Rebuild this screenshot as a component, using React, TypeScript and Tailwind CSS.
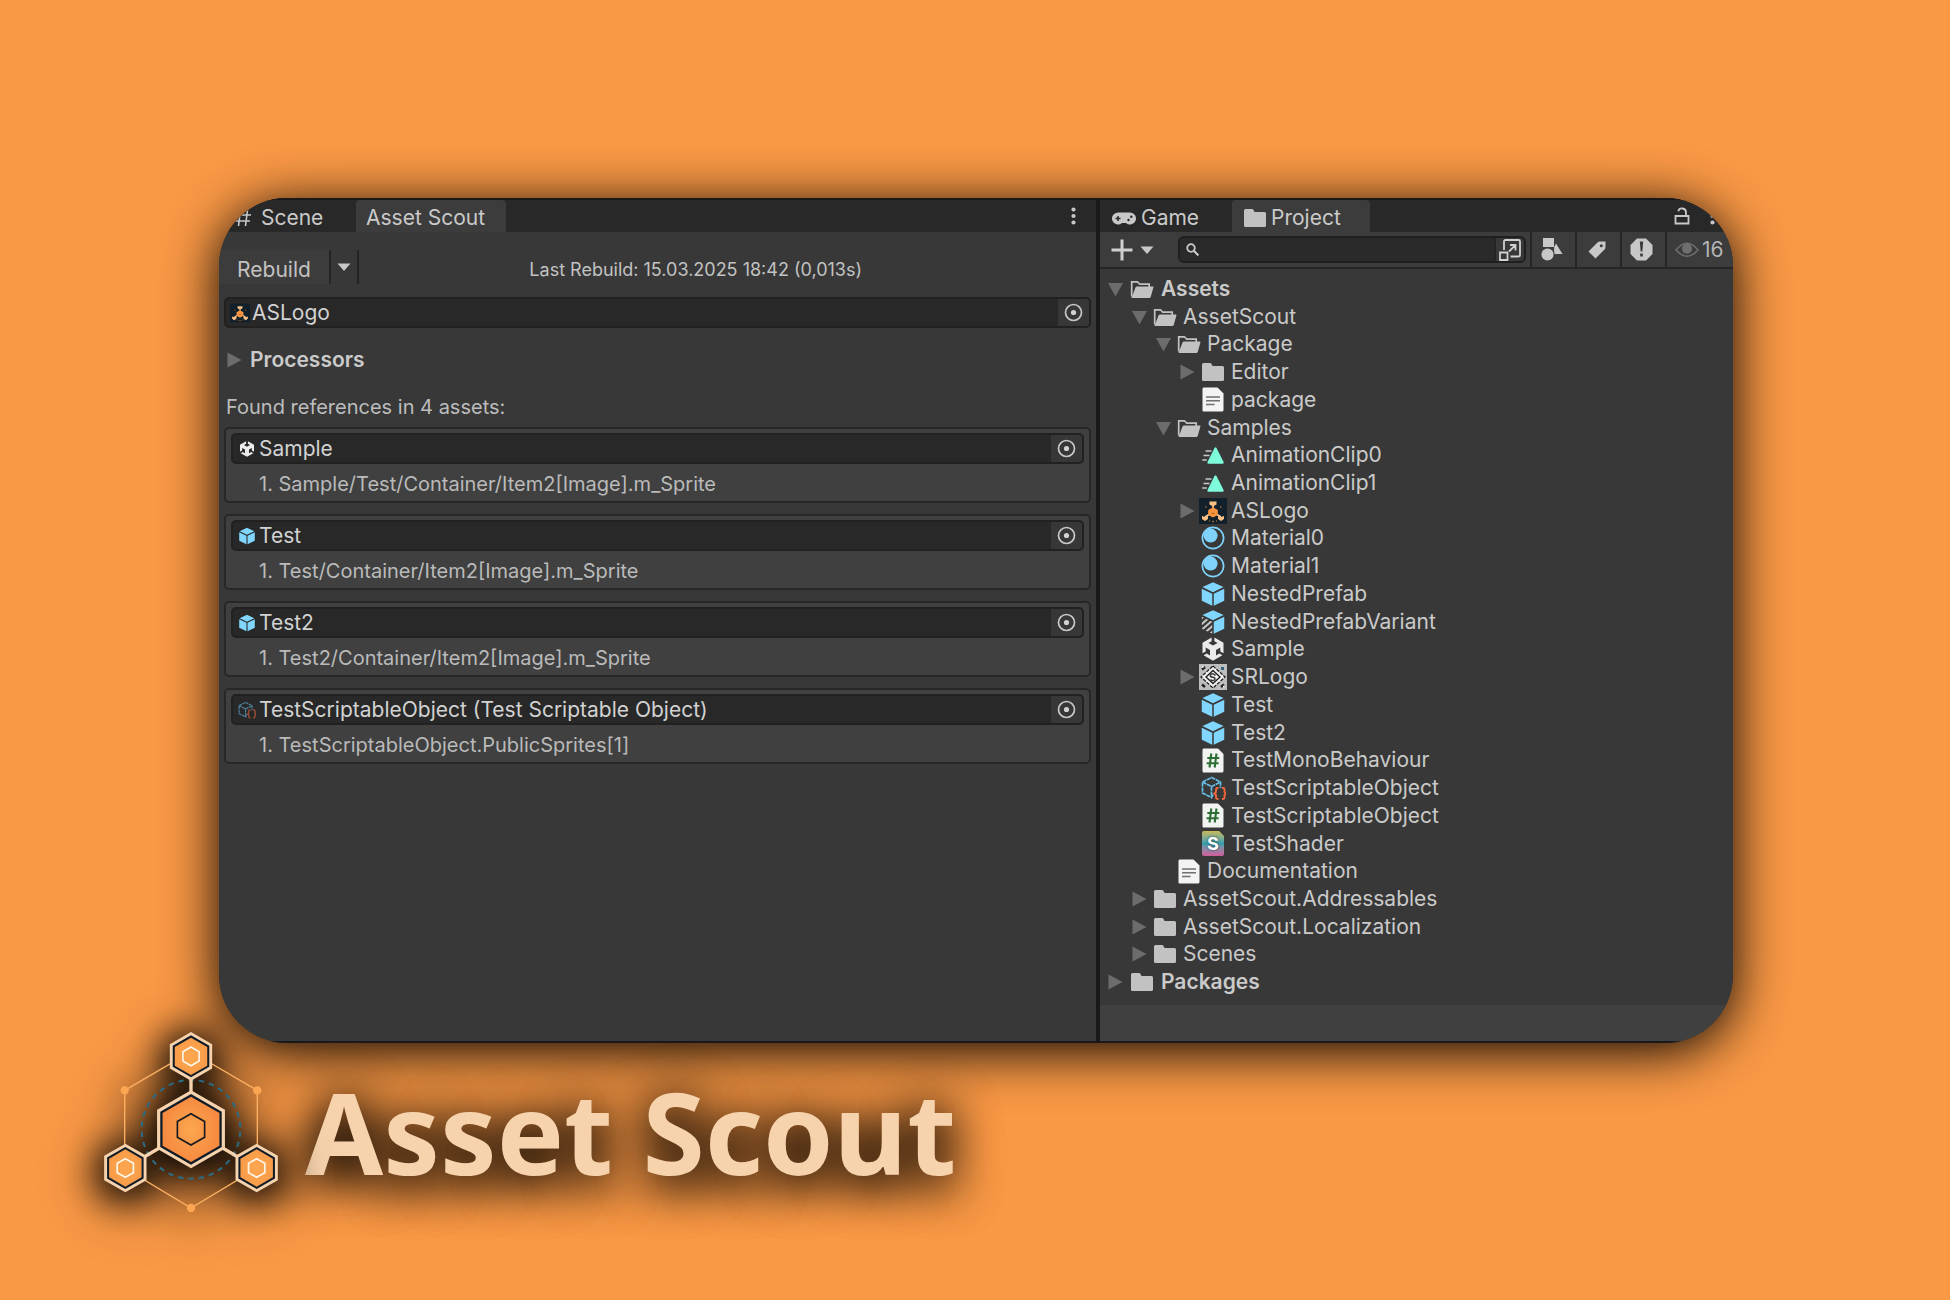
import React from "react";

type IconProps = { className?: string };

const hex = (cx: number, cy: number, r: number) => {
  const w = r * 0.87;
  return `${cx},${cy - r} ${cx + w},${cy - r / 2} ${cx + w},${cy + r / 2} ${cx},${cy + r} ${cx - w},${cy + r / 2} ${cx - w},${cy - r / 2}`;
};

function BrandLogo() {
  const nodes = [
    [333, 169],
    [136, 504],
    [530, 504],
  ];
  return (
    <svg
      viewBox="69 93 528 546"
      className="h-[182px] w-44 shrink-0 overflow-visible [filter:drop-shadow(0_4px_20px_rgba(0,0,0,1))_drop-shadow(0_4px_20px_rgba(0,0,0,0.9))]"
      aria-hidden="true"
    >
      <defs>
        <radialGradient id="core">
          <stop offset="0" stopColor="#fca750" />
          <stop offset="1" stopColor="#f68a40" />
        </radialGradient>
        <radialGradient id="node">
          <stop offset="0" stopColor="#fca850" />
          <stop offset="1" stopColor="#f99b48" />
        </radialGradient>
      </defs>
      <path d="M333 155 134 271V504L333 624 532 504V271z" stroke="#fbb062" strokeWidth="4" fill="none" />
      <circle cx="333" cy="388" r="148" fill="none" stroke="#2b6c85" strokeWidth="6" strokeDasharray="16 15" strokeDashoffset="-7" />
      <path d="M333 169V388L136 504M333 388 530 504" stroke="#f7d3ad" strokeWidth="10" fill="none" />
      <g fill="#fca552">
        <circle cx="134" cy="271" r="12.5" />
        <circle cx="532" cy="271" r="12.5" />
        <circle cx="333" cy="624" r="12.5" />
      </g>
      {nodes.map(([x, y]) => (
        <g key={x}>
          <polygon points={hex(x, y, 73)} fill="#f7d3ad" />
          <polygon points={hex(x, y, 63)} fill="#0f1c28" />
          <polygon points={hex(x, y, 56)} fill="url(#node)" />
          <polygon points={hex(x, y, 28)} fill="none" stroke="#fff6ea" strokeWidth="5" />
        </g>
      ))}
      <polygon points={hex(333, 388, 117)} fill="#f7d3ad" />
      <polygon points={hex(333, 388, 106)} fill="#0f1c28" />
      <polygon points={hex(333, 388, 98)} fill="url(#core)" />
      <polygon points={hex(333, 388, 47)} fill="none" stroke="#191a20" strokeWidth="5" />
    </svg>
  );
}

const Foldout = ({ open }: { open?: boolean }) => (
  <svg viewBox="0 0 15 16" className="h-4 w-[15px]" fill="#6c6c6c" aria-hidden="true">
    {open ? <path d="M0 2h15L7.500 15.500z" /> : <path d="M.5 .5v15L14.500 8z" />}
  </svg>
);

const Caret = ({ className = "" }: IconProps) => (
  <svg viewBox="0 0 14 8" className={`h-2 w-3.5 ${className}`} fill="#c8c8c8" aria-hidden="true">
    <path d="M.5 .5h13L7 8z" />
  </svg>
);

const Dots = () => (
  <svg viewBox="0 0 5 18" className="h-[18px] w-[5px]" fill="#c8c8c8" aria-hidden="true">
    <circle cx="2.500" cy="2.500" r="2.100" />
    <circle cx="2.500" cy="9" r="2.100" />
    <circle cx="2.500" cy="15.500" r="2.100" />
  </svg>
);

const Folder = () => (
  <svg viewBox="0 0 22 18" className="h-[18px] w-[22px]" fill="#c2c2c2" aria-hidden="true">
    <path d="M1.500 0H8q1 0 1.500 1l1 2H20.500q1.500 0 1.500 1.500v12q0 1.500-1.500 1.500h-19Q0 18 0 16.500v-15Q0 0 1.500 0z" />
  </svg>
);

const FolderOpen = () => (
  <svg viewBox="0 0 24 18" className="h-[18px] w-6" aria-hidden="true">
    <path d="M1.700 16.500V1.800h5.800L9.700 4.200h9.500v3" fill="none" stroke="#c2c2c2" strokeWidth="1.700" />
    <path d="M5.500 7.500q.5-1 1.500-1h15.800q1 0 .6 1L20.700 17q-.4 1-1.500 1H1.500z" fill="#c2c2c2" />
  </svg>
);

const Doc = () => (
  <svg viewBox="0 0 22 25" className="h-[25px] w-[22px]" aria-hidden="true">
    <path d="M1.500 .5H15.500L21.500 6.500v16.500q0 1.500-1.500 1.500H1.500Q.5 24.500 .5 23V2Q.5 .5 1.500 .5z" fill="#f3f3f3" />
    <path d="M4 10h14M4 13.800h14M4 17.500h8.500" stroke="#707070" strokeWidth="1.500" />
  </svg>
);

const Script = () => (
  <svg viewBox="0 0 22 25" className="h-[25px] w-[22px]" aria-hidden="true">
    <path d="M1.500 .5H16L21.500 6v17q0 1.500-1.500 1.500H1.500Q.5 24.500 .5 23V2Q.5 .5 1.500 .5z" fill="#f1f4f1" />
    <path d="M9.300 5.500 7.500 19.500M14.500 5.500l-1.800 14M5.300 10h12M4.600 15.300h12" stroke="#2c6e33" strokeWidth="2.100" />
  </svg>
);

const Shader = () => (
  <span className="flex h-[25px] w-[22px] items-center justify-center rounded-xs bg-linear-to-b from-[#c9b958] via-[#2f9fae] to-[#cf5a9c] text-lg leading-none font-bold text-white [clip-path:polygon(0_0,78%_0,100%_20%,100%_100%,0_100%)] [text-shadow:0_0_3px_#12484f]">
    S
  </span>
);

const Clip = () => (
  <svg viewBox="0 0 22 17" className="h-[17px] w-[22px]" aria-hidden="true">
    <path d="M12.500 1q1-1.400 2 0L21.600 15q.4 1.700-1 1.700H6.500q-1.500 0-1-1.700z" fill="#7dfbdb" />
    <path d="M3.500 4h6M1.500 8.500h6M.3 13h4.500" stroke="#c8cccb" strokeWidth="1.600" />
  </svg>
);

const Material = () => (
  <svg viewBox="0 0 24 24" className="size-6" aria-hidden="true">
    <circle cx="12" cy="12" r="10.600" fill="none" stroke="#7fd3fb" strokeWidth="1.700" />
    <circle cx="9.600" cy="9.600" r="7" fill="#7fd3fb" />
  </svg>
);

const Cube = ({ className = "size-6" }: IconProps) => (
  <svg viewBox="0 0 24 25" className={className} fill="#80d6fd" aria-hidden="true">
    <path d="M12 .3 23 5.300 12 10.600 1 5.300z" />
    <path d="M.3 7 11.200 12.300V24.800L.3 19.500z" />
    <path d="M23.700 7 12.800 12.300V24.800L23.700 19.500z" />
  </svg>
);

const CubeVariant = () => (
  <svg viewBox="0 0 24 25" className="size-6" fill="#80d6fd" aria-hidden="true">
    <defs>
      <clipPath id="variantFace">
        <path d="M.3 7 11.200 12.300V24.800L.3 19.500z" />
      </clipPath>
    </defs>
    <path d="M12 .3 23 5.300 12 10.600 1 5.300z" />
    <path d="M23.700 7 12.800 12.300V24.800L23.700 19.500z" />
    <path clipPath="url(#variantFace)" d="M-3 11 6 4M-2 16.500 12 4.500M-1 21.500 14 8.500M2 25 14 14.500M6 27.500 14 20.500" stroke="#c6c6c6" strokeWidth="2.100" />
  </svg>
);

const UnityScene = ({ className = "size-6" }: IconProps) => (
  <svg viewBox="0 0 24 24" className={className} fill="#ebebeb" aria-hidden="true">
    <path d="M10.600 .5V4.200L7.400 6l4.600 2.600L16.600 6 13.400 4.200V.5L22.500 5.800v10.400l-3.200-1.800v-4L15 12.900v5.500l3.300-1.900 3.100 1.800L12 23.700 2.600 18.300l3.100-1.800L9 18.400v-5.500L4.700 10.400v4L1.500 16.200V5.800z" />
  </svg>
);

const ScriptableObj = ({ className = "h-6 w-[25px]" }: IconProps) => (
  <svg viewBox="0 0 25 24" className={className} fill="none" aria-hidden="true">
    <path d="M12 18.500 10.500 21.500 1.500 17V6L10.500 1.500 19.500 6v6M1.500 6l9 4.500L19.500 6M10.500 10.500v11" stroke="#68bfe8" strokeWidth="1.700" strokeDasharray="4.200 .7" />
    <path d="M17.500 12h-1q-1.500 0-1.500 1.500v2.500L13.300 17.500 15 19v2.500Q15 23 16.500 23h1M21 12h1q1.500 0 1.500 1.500v2.500l1.300 1.500L23.500 19v2.500Q23.500 23 22 23h-1" stroke="#f0673c" strokeWidth="1.900" />
  </svg>
);

const AsThumb = ({ className = "h-[26px] w-7" }: IconProps) => (
  <svg viewBox="0 0 28 26" className={className} aria-hidden="true">
    <path d="M0 0h28v26H0z" fill="#12202c" />
    <path d="M14 8v6L6 19M14 14l8 5" stroke="#f5cfa4" strokeWidth="1.600" fill="none" />
    <path d="M10.500 3.500h7v3L14 8.500 10.500 6.500zM3 18l3 1 3-1v3l-3 2-3-2zM19 18l3 1 3-1v3l-3 2-3-2z" fill="#fcc083" />
    <path d="M14 9.200 18.800 12v5L14 19.500 9.200 17v-5z" fill="#f9953f" />
    <path d="M12.500 15q1.500 1.200 3 0" stroke="#a85d25" fill="none" />
    <path d="M6 9h1.500M21 9h1.500M13 23.500h2M10 23h1M17 23h1" stroke="#9a6433" strokeWidth="1.400" />
  </svg>
);

const SrThumb = () => (
  <svg viewBox="0 0 28 26" className="h-[26px] w-7" fill="none" aria-hidden="true">
    <path d="M0 0h28v26H0z" fill="#bdbdbd" />
    <path d="M14 2 26 13 14 24 2 13z" fill="#f4f4f4" stroke="#222" strokeWidth="1.300" strokeDasharray="3.500 1.200" />
    <path d="M14 6.500 21 13l-7 6.500L7 13z" stroke="#222" strokeWidth="1.400" />
    <path d="M16.500 11.500Q14 8.500 11.500 11q-1 2 2.500 2.300 3 .7 1.500 2.700-2 1.500-4-.5" stroke="#333" strokeWidth="1.500" />
    <path d="M3 5.500 6 3M3 20.500 6 23M22 23l3-2.500" stroke="#222" strokeWidth="2.400" />
    <path d="M3 3h1.500M24 22.500h1.500" stroke="#fff" strokeWidth="1.500" />
    <path d="M22 4.500h3" stroke="#35637c" strokeWidth="3" />
  </svg>
);

const Gamepad = () => (
  <svg viewBox="0 0 24 13" className="h-[13px] w-6" aria-hidden="true">
    <path d="M6 .5h12a6 6 0 1 1-4 10.500h-4A6 6 0 1 1 6 .5z" fill="#c8c8c8" />
    <path d="M3.500 6.500h5M6 4v5" stroke="#282828" strokeWidth="1.500" />
    <circle cx="19.300" cy="4.700" r="1.200" fill="#282828" />
    <circle cx="16.500" cy="8" r="1.200" fill="#282828" />
  </svg>
);

const Target = () => (
  <svg viewBox="0 0 19 19" className="size-[19px]" fill="none" aria-hidden="true">
    <circle cx="9.500" cy="9.500" r="8" stroke="#c8c8c8" strokeWidth="1.700" />
    <circle cx="9.500" cy="9.500" r="2.600" fill="#d2d2d2" />
  </svg>
);

function ObjectField({ icon, label }: { icon: React.ReactNode; label: string }) {
  return (
    <div className="flex h-[31px] items-stretch overflow-hidden rounded-[5px] border-2 border-[#212121] bg-[#282828]">
      <div className="flex flex-1 items-center gap-0.5 pl-1 text-[#d2d2d2]">
        <span className="flex w-5 justify-center">{icon}</span>
        <span className="leading-6">{label}</span>
      </div>
      <button type="button" aria-label={`Select ${label}`} className="flex w-[31px] items-center justify-center bg-[#373737]">
        <Target />
      </button>
    </div>
  );
}

const references = [
  { icon: <UnityScene className="size-4" />, label: "Sample", path: "1. Sample/Test/Container/Item2[Image].m_Sprite" },
  { icon: <Cube className="h-[18px] w-4" />, label: "Test", path: "1. Test/Container/Item2[Image].m_Sprite" },
  { icon: <Cube className="h-[18px] w-4" />, label: "Test2", path: "1. Test2/Container/Item2[Image].m_Sprite" },
  { icon: <ScriptableObj className="h-[18px] w-[18px] opacity-60" />, label: "TestScriptableObject (Test Scriptable Object)", path: "1. TestScriptableObject.PublicSprites[1]" },
];

function ScoutPanel() {
  return (
    <section className="flex min-w-0 flex-col border-b-2 border-[#191919] bg-[#383838]">
      <div className="flex h-[34px] items-stretch border-t-2 border-[#191919] bg-[#282828]">
        <button type="button" className="flex w-[137px] items-center gap-2.5 pt-1 pl-4">
          <svg viewBox="0 0 16 16" className="size-4" fill="none" stroke="#c8c8c8" strokeWidth="1.600" aria-hidden="true">
            <path d="M5.500 0 3.500 16M12.500 0l-2 16M1 5h15M0 11h15" />
          </svg>
          Scene
        </button>
        <button type="button" className="flex w-[150px] items-center rounded-t-[4px] bg-[#3c3c3c] pt-1 pl-2.5">
          Asset Scout
        </button>
        <button type="button" aria-label="Panel menu" className="mr-5 ml-auto">
          <Dots />
        </button>
      </div>
      <div className="mt-[18px] flex h-[34px] items-stretch">
        <button type="button" className="w-28 border-r-2 border-[#242424] bg-[#3c3c3c] pt-1 text-center text-[#c2c2c2]">
          Rebuild
        </button>
        <button type="button" aria-label="Rebuild options" className="flex w-7 items-center justify-center border-r-2 border-[#242424]">
          <Caret />
        </button>
        <p className="flex flex-1 items-center justify-end pt-1.5 pr-[234px] text-lg text-[#c2c2c2]">
          Last Rebuild: 15.03.2025 18:42 (0,013s)
        </p>
      </div>
      <div className="mt-[13px] px-[5px]">
        <ObjectField icon={<AsThumb className="size-5" />} label="ASLogo" />
      </div>
      <button type="button" className="mt-5 flex items-center gap-2 pl-2 leading-6 font-semibold">
        <Foldout />
        Processors
      </button>
      <p className="mt-[23px] pl-[7px] text-xl leading-6 text-[#bdbdbd]">Found references in 4 assets:</p>
      <ul className="mt-2 flex flex-col gap-[11px] px-[5px]">
        {references.map((r) => (
          <li key={r.label} className="h-[76px] rounded-[5px] border-2 border-[#272727] bg-[#404040] px-[5px] pt-1">
            <ObjectField icon={r.icon} label={r.label} />
            <p className="mt-2 pl-7 text-xl leading-6 text-[#bababa]">{r.path}</p>
          </li>
        ))}
      </ul>
    </section>
  );
}

type Node = { level: number; icon: React.ReactNode; label: string; fold?: "open" | "closed" };

const tree: Node[] = [
  { level: 0, icon: <FolderOpen />, label: "Assets", fold: "open" },
  { level: 1, icon: <FolderOpen />, label: "AssetScout", fold: "open" },
  { level: 2, icon: <FolderOpen />, label: "Package", fold: "open" },
  { level: 3, icon: <Folder />, label: "Editor", fold: "closed" },
  { level: 3, icon: <Doc />, label: "package" },
  { level: 2, icon: <FolderOpen />, label: "Samples", fold: "open" },
  { level: 3, icon: <Clip />, label: "AnimationClip0" },
  { level: 3, icon: <Clip />, label: "AnimationClip1" },
  { level: 3, icon: <AsThumb />, label: "ASLogo", fold: "closed" },
  { level: 3, icon: <Material />, label: "Material0" },
  { level: 3, icon: <Material />, label: "Material1" },
  { level: 3, icon: <Cube />, label: "NestedPrefab" },
  { level: 3, icon: <CubeVariant />, label: "NestedPrefabVariant" },
  { level: 3, icon: <UnityScene />, label: "Sample" },
  { level: 3, icon: <SrThumb />, label: "SRLogo", fold: "closed" },
  { level: 3, icon: <Cube />, label: "Test" },
  { level: 3, icon: <Cube />, label: "Test2" },
  { level: 3, icon: <Script />, label: "TestMonoBehaviour" },
  { level: 3, icon: <ScriptableObj />, label: "TestScriptableObject" },
  { level: 3, icon: <Script />, label: "TestScriptableObject" },
  { level: 3, icon: <Shader />, label: "TestShader" },
  { level: 2, icon: <Doc />, label: "Documentation" },
  { level: 1, icon: <Folder />, label: "AssetScout.Addressables", fold: "closed" },
  { level: 1, icon: <Folder />, label: "AssetScout.Localization", fold: "closed" },
  { level: 1, icon: <Folder />, label: "Scenes", fold: "closed" },
  { level: 0, icon: <Folder />, label: "Packages", fold: "closed" },
];

const indent = ["gap-[5px] pl-2 font-semibold", "gap-1 pl-8", "gap-1 pl-14", "gap-1 pl-20"];

function TreeRow({ node }: { node: Node }) {
  return (
    <li className={`flex min-h-6 flex-1 items-center ${indent[node.level]}`}>
      {node.fold ? (
        <button type="button" aria-label={`Toggle ${node.label}`} className="w-[15px]">
          <Foldout open={node.fold === "open"} />
        </button>
      ) : (
        <span className="w-[15px]" />
      )}
      <span className="flex w-7 justify-center">{node.icon}</span>
      <span className="leading-6">{node.label}</span>
    </li>
  );
}

const toolButton = "flex w-[45px] items-center justify-center border-l-2 border-[#262626] pr-1";

function ProjectPanel() {
  return (
    <section className="flex min-w-0 flex-col bg-[#383838]">
      <div className="flex h-[34px] items-stretch border-t-2 border-[#191919] bg-[#282828]">
        <button type="button" className="flex w-[132px] items-center gap-[5px] pt-1 pl-3">
          <Gamepad />
          Game
        </button>
        <button type="button" className="flex w-[138px] items-center gap-[5px] rounded-t-[4px] bg-[#3c3c3c] pt-1 pl-3">
          <Folder />
          Project
        </button>
        <button type="button" aria-label="Lock" className="ml-auto">
          <svg viewBox="0 0 16 18" className="h-[18px] w-4" fill="none" stroke="#c8c8c8" strokeWidth="1.800" aria-hidden="true">
            <path d="M1.500 9h13v7.500h-13z" />
            <path d="M12 9V5.500a4 4 0 0 0-7.800-1.300" />
          </svg>
        </button>
        <button type="button" aria-label="Panel menu" className="mr-[18px] ml-5">
          <Dots />
        </button>
      </div>
      <div className="flex h-[37px] items-stretch border-b-2 border-[#262626] bg-[#3c3c3c]">
        <button type="button" aria-label="Create" className="flex items-center gap-[7px] pl-[11px]">
          <svg viewBox="0 0 22 22" className="size-[22px]" stroke="#cfcfcf" strokeWidth="3" aria-hidden="true">
            <path d="M11 .5v21M.5 11h21" />
          </svg>
          <Caret />
        </button>
        <div className="my-1 mr-1 ml-6 flex flex-1 items-center overflow-hidden rounded-[6px] border-2 border-[#1f1f1f] bg-[#2a2a2a]">
          <svg viewBox="0 0 13 13" className="ml-1.5 size-[13px] shrink-0" fill="none" stroke="#c8c8c8" aria-hidden="true">
            <circle cx="5" cy="5" r="3.800" strokeWidth="1.800" />
            <path d="M7.800 7.800 12.400 12.400" strokeWidth="2.200" />
          </svg>
          <input type="text" aria-label="Search" className="min-w-0 flex-1 bg-transparent px-1 outline-none" />
          <button type="button" aria-label="Open search window" className="flex w-[30px] items-center justify-center self-stretch border-l-2 border-[#242424] bg-[#383838]">
            <svg viewBox="0 0 22 22" className="size-[22px]" fill="none" stroke="#d0d0d0" strokeWidth="1.800" aria-hidden="true">
              <path d="M5 11V2.500Q5 1 6.500 1H19.500Q21 1 21 2.500V16Q21 17.500 19.500 17.500H11.500" />
              <path d="M1 13.500h7.500V21H1zM10 12.500l6.500-6.500M11 6h5.500v5.500" />
            </svg>
          </button>
        </div>
        <button type="button" aria-label="Filter by type" className={toolButton}>
          <svg viewBox="0 0 22 23" className="h-[23px] w-[22px]" fill="#c8c8c8" aria-hidden="true">
            <path d="M2 0h11v9H2z" />
            <path d="M15 5.500 21.500 16H13.500Q12.800 11 13.200 9z" />
            <circle cx="6.500" cy="16.500" r="6.800" fill="#3c3c3c" />
            <circle cx="6.500" cy="16.500" r="6.100" />
          </svg>
        </button>
        <button type="button" aria-label="Filter by label" className={toolButton}>
          <svg viewBox="0 0 18 18" className="size-[18px]" aria-hidden="true">
            <path d="M9.500 1.500Q10.500 .5 12 .5h5.500V6q0 1.500-1 2.500L7.500 17.500.5 10.500z" fill="#c8c8c8" />
            <circle cx="13.300" cy="4.800" r="1.500" fill="#3c3c3c" />
          </svg>
        </button>
        <button type="button" aria-label="Filter errors" className={toolButton}>
          <svg viewBox="0 0 23 23" className="size-[23px]" aria-hidden="true">
            <path d="M7 .5h9L22.500 7v9L16 22.500H7L.5 16V7z" fill="#c8c8c8" />
            <path d="M9.800 3.500h3.400l-.8 10h-1.800zM10.200 15.500h2.600v3h-2.600z" fill="#3c3c3c" />
          </svg>
        </button>
        <button type="button" aria-label="Hidden packages" className="flex w-[68px] items-center gap-[3px] border-l-2 border-[#262626] pl-2 text-[#b4b4b4]">
          <svg viewBox="0 0 24 16" className="h-4 w-6" aria-hidden="true">
            <path d="M1 8Q12-5.500 23 8 12 20.500 1 8z" fill="none" stroke="#6f6f6f" strokeWidth="1.500" />
            <circle cx="12" cy="6.700" r="5" fill="#6f6f6f" />
          </svg>
          16
        </button>
      </div>
      <ul className="flex flex-1 flex-col pt-1.5 pb-[9px]">
        {tree.map((node, i) => (
          <TreeRow key={i} node={node} />
        ))}
      </ul>
      <div className="h-[38px] border-b-2 border-[#191919] bg-[#404040]" />
    </section>
  );
}

export default function App() {
  return (
    <main className="isolate flex min-h-screen flex-col bg-[#f99845] pt-[198px] font-['Inter',sans-serif] text-[21px] text-[#cacaca]">
      <div className="relative mr-[217px] ml-[219px] flex flex-1">
        <div className="absolute inset-0 rounded-[68px] shadow-[0_8px_54px_rgba(0,0,0,1)]" />
        <div className="relative z-20 grid flex-1 grid-cols-[877fr_4px_633fr] overflow-hidden rounded-[68px] bg-[#191919]">
          <ScoutPanel />
          <div />
          <ProjectPanel />
        </div>
      </div>
      <footer className="relative z-10 -mt-3 flex h-[269px] items-start pl-[103px]">
        <BrandLogo />
        <h1 className="mt-11 ml-[26px] font-['Noto_Sans',sans-serif] text-[113px] leading-none font-bold whitespace-nowrap text-[#f7d3ad] [text-shadow:0_8px_50px_rgba(0,0,0,1),0_8px_50px_rgba(0,0,0,1)]">
          Asset Scout
        </h1>
      </footer>
    </main>
  );
}
